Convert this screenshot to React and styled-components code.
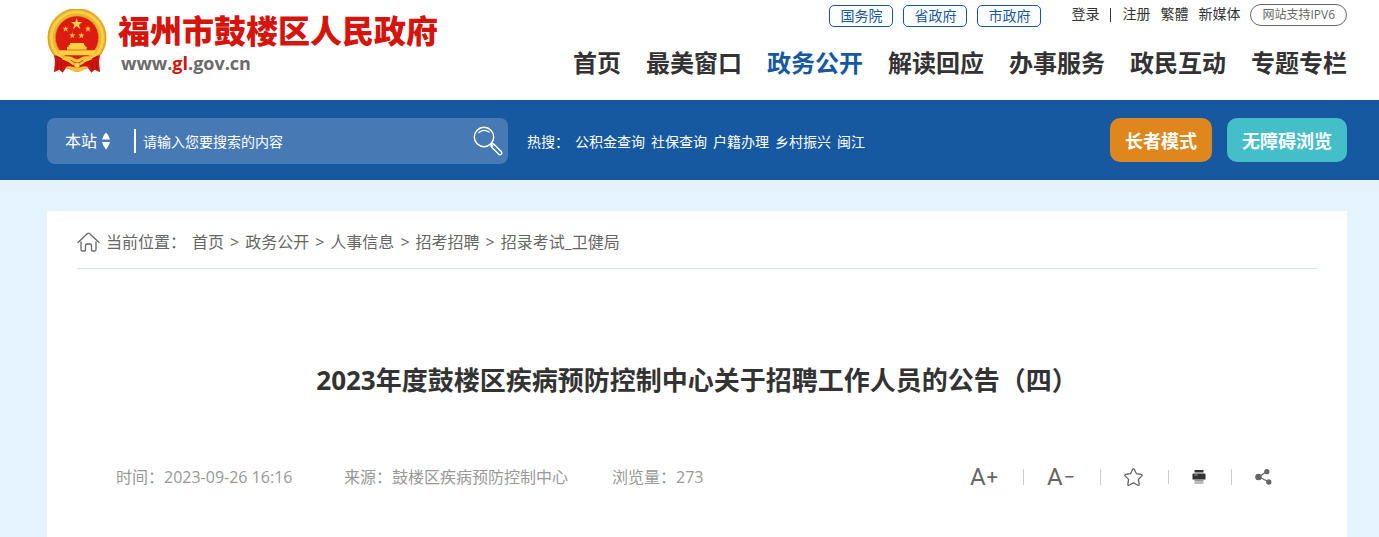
import React from 'react'
import styled, { createGlobalStyle, css } from 'styled-components'

const GlobalStyle = createGlobalStyle`
    * {
        box-sizing: border-box;
    }

    body {
        margin: 0;
        min-height: 100vh;
        background-color: #e5f2ff;
        color: #333;
        font-family: "Open Sans", "Noto Sans CJK SC", sans-serif;
        font-size: 14px;
    }

    a {
        color: inherit;
        text-decoration: none;
    }

    button, input, select {
        font: inherit;
        color: inherit;
        margin: 0;
        padding: 0;
        border: 0 none;
        background: none;
    }

    button {
        cursor: pointer;
    }
`

const Gutter = styled.div`
    padding: 0 32px 0 47px;
`

const Header = styled(Gutter).attrs({ as: 'header' })`
    display: flex;
    justify-content: space-between;
    height: 100px;
    background-color: #fff;
`

const Brand = styled.a`
    display: flex;
    align-items: flex-start;
    gap: 11px;
    padding-top: 9px;
`

const BrandText = styled.span`
    display: flex;
    flex-direction: column;
`

const BrandName = styled.span`
    color: #d5140c;
    font-size: 32px;
    font-weight: 900;
    line-height: 44px;
    white-space: nowrap;
`

const BrandUrl = styled.span`
    padding-left: 3px;
    color: #6b6b6b;
    font-size: 18px;
    font-weight: 700;
    line-height: 20px;

    & > em {
        color: #d5140c;
        font-style: normal;
    }
`

const HeaderRight = styled.div`
    display: flex;
    flex-direction: column;
    align-items: flex-end;
    padding-top: 4px;
`

const TopBar = styled.div`
    display: flex;
    align-items: flex-start;
    gap: 10px;
    line-height: 20px;
    white-space: nowrap;
`

const GovLinks = styled.div`
    display: flex;
    gap: 10px;
    padding-top: 1px;
`

const GovLink = styled.a`
    height: 22px;
    padding: 0 10px;
    border: 1px solid #1659a1;
    border-radius: 5px;
    color: #1659a1;
`

const UserLinks = styled.div`
    display: flex;
    gap: 10px;
    padding-left: 20px;
`

const Pipe = styled.span`
    width: 3px;
    text-align: center;

    &:after {
        content: '';
        display: inline-block;
        width: 1px;
        height: 14px;
        background-color: #333;
        vertical-align: middle;
    }
`

const Ipv6Link = styled.a`
    height: 22px;
    padding: 0 11px;
    border: 1px solid #666;
    border-radius: 11px;
    color: #666;
    font-size: 12px;
`

const Nav = styled.nav`
    display: flex;
    gap: 25px;
    margin-top: 18px;
`

const NavLink = styled.a`
    font-size: 24px;
    font-weight: 700;
    line-height: 36px;
    white-space: nowrap;
    ${({ $active }) => $active ? css`color: #1659a1;` : ''}
`

const SearchBand = styled(Gutter)`
    display: flex;
    align-items: flex-start;
    gap: 19px;
    height: 80px;
    padding-top: 18px;
    background-color: #1659a1;
    color: #fff;
`

const SearchForm = styled.form`
    display: flex;
    align-items: center;
    flex: 0 1 461px;
    height: 46px;
    padding: 0 5px 0 18px;
    border-radius: 8px;
    background-color: #477ab4;
`

const ScopeLabel = styled.label`
    display: flex;
    align-items: center;
    gap: 4px;
    padding-right: 23px;
`

const ScopeSelect = styled.select`
    appearance: none;
    width: 32px;
    font-size: 16px;
    line-height: 24px;
`

const SearchInput = styled.input`
    flex: 1 1 auto;
    min-width: 0;
    height: 24px;
    padding-left: 7px;
    border-left: 2px solid #fff;
    outline: none;

    &::placeholder {
        color: #fff;
        opacity: 1;
    }
`

const IconButton = styled.button`
    display: flex;
    align-items: center;
    justify-content: center;
`

const HotSearch = styled.div`
    display: flex;
    gap: 6px;
    flex: 1 1 auto;
    line-height: 48px;
    white-space: nowrap;
`

const ModeButtons = styled.div`
    display: flex;
    gap: 15px;
`

const ModeButton = styled.button`
    height: 44px;
    padding: 0 15px;
    border-radius: 10px;
    background-color: ${({ $color }) => $color};
    font-size: 18px;
    font-weight: 700;
    white-space: nowrap;
`

const Content = styled(Gutter).attrs({ as: 'main' })`
    padding-top: 31px;
`

const Article = styled.article`
    min-height: calc(100vh - 211px);
    padding: 0 30px;
    background-color: #fff;
`

const Breadcrumb = styled.nav`
    display: flex;
    align-items: center;
    gap: 6px;
    height: 58px;
    padding-top: 5px;
    border-bottom: 1px solid #d0e0f0;
    color: #666;
    font-size: 16px;
    line-height: 24px;
    white-space: nowrap;
`

const Crumbs = styled.span`
    display: flex;
    gap: 6px;
`

const Title = styled.h1`
    margin: 91px 0 0;
    font-size: 26px;
    font-weight: 700;
    line-height: 40px;
    text-align: center;
`

const MetaRow = styled.div`
    display: flex;
    align-items: center;
    justify-content: space-between;
    padding: 63px 45px 0 39px;
`

const Meta = styled.div`
    display: flex;
    gap: 44px;
    color: #999;
    font-size: 16px;
    line-height: 24px;
    white-space: nowrap;
`

const PublishTime = styled.span`
    min-width: 184px;
`

const Tools = styled.div`
    display: flex;
    align-items: center;
    color: #666;

    & > * + * {
        margin-left: 25px;
        padding-left: 24px;
        background: linear-gradient(#ccc, #ccc) left center / 1px 16px no-repeat;
    }
`

const FontSizeButton = styled(IconButton)`
    gap: 1px;
    font-family: Roboto, sans-serif;
    font-size: 24px;
    line-height: 28px;
`

const Emblem = () => (
    <svg width="60" height="66" viewBox="21 25 180 198" aria-hidden="true">
        <circle cx="111" cy="111" r="76" fill="#d9190f" stroke="#edb52c" strokeWidth="25" />
        <circle cx="111" cy="111" r="86" fill="none" stroke="#dca425" strokeWidth="3" />
        <circle cx="111" cy="111" r="77" fill="none" stroke="#f8cf4c" strokeWidth="8" />
        <circle cx="111" cy="111" r="65" fill="#dc1b12" stroke="#dd9a1d" strokeWidth="2" />
        <path d="M110 52l4 12h13l-10 8 4 13-11-8-11 8 4-13-10-8h13z" fill="#ffcf45" />
        <g fill="#f6bc39">
            <path d="M77 75l2 6h7l-5 5 2 7-6-4-6 4 2-7-5-5h7z" />
            <path d="M144 75l2 6h7l-5 5 2 7-6-4-6 4 2-7-5-5h7z" />
            <path d="M97 95l2 6h7l-5 5 2 7-6-4-6 4 2-7-5-5h7z" />
            <path d="M124 95l2 6h7l-5 5 2 7-6-4-6 4 2-7-5-5h7z" />
        </g>
        <path d="M91 127h40l3 8h-46zM86 134h50v6h-50zM81 138h59v9h-59zM55 149h112l-6 15h-100z" fill="#fdd13f" />
        <path d="M84 147h54" stroke="#e39b23" strokeWidth="2" />
        <path d="M42 164q10 0 18 6l17 10 34 14 34-14 17-10q8-6 18-6l-3 18 3 33-16-8-10 9-10-14-12 4q-21 14-42 0l-12-4-10 14-10-9-16 8 3-33z" fill="#cf1510" />
        <path d="M48 168q24 9 32 22M174 168q-24 9-32 22M55 180l-4 26M65 184l-2 24M167 180l4 26M157 184l2 24" fill="none" stroke="#b00d0b" strokeWidth="3" />
        <path d="M72 170q18-8 30 3l9 5 9-5q12-11 30-3l6 8q-16-1-22 7-8 10-23 10t-23-10q-6-8-22-7z" fill="#f5c53b" />
        <path d="M92 178q10 9 19 9t19-9" fill="none" stroke="#c44a16" strokeWidth="3" />
        <path d="M76 200q11-6 21-2l14 4 14-4q10-4 21 2-9 3-16 9-19 9-38 0-7-6-16-9z" fill="#f3c23b" />
        <circle cx="111" cy="194" r="8" fill="#ffd85a" stroke="#d58e18" strokeWidth="2" />
    </svg>
)

const SortArrows = () => (
    <svg width="10" height="18" viewBox="0 0 10 18" fill="#fff" aria-hidden="true">
        <path d="M5 0.500Q7.500 2.500 9 7.500H1Q2.500 2.500 5 .5zM1 10H9Q7.500 15 5 17.500 2.500 15 1 10z" />
    </svg>
)

const SearchIcon = () => (
    <svg width="30" height="30" viewBox="0 0 30 30" fill="none" stroke="#fff" strokeWidth="1.400" aria-hidden="true">
        <circle cx="11" cy="11" r="9.700" />
        <path d="M6 6.500Q10.500 2.500 16 6M17.700 18l2 2" strokeLinecap="round" />
        <path d="M18.500 21q-1.200-1.500 0-2.700 1.300-1 2.700.2l7 7q1.200 1.500 0 2.700-1.300 1-2.700-.2z" />
    </svg>
)

const HomeIcon = () => (
    <svg width="23" height="20" viewBox="0 0 23 20" fill="none" stroke="#666" strokeWidth="1.300" strokeLinecap="round" strokeLinejoin="round" aria-hidden="true">
        <path d="M1 10.500L10.200 1.700q1.300-1.200 2.600 0L22 10.500" />
        <path d="M4 10v7.500q0 1.500 1.500 1.500h2q1 0 1-1v-4.500q0-1.500 1.500-1.500h3q1.500 0 1.500 1.500V18q0 1 1 1h2q1.500 0 1.500-1.500V10" />
    </svg>
)

const StarIcon = () => (
    <svg width="19" height="18" viewBox="0 0 19 18" fill="none" stroke="#666" strokeWidth="1.300" strokeLinejoin="round" aria-hidden="true">
        <path d="M8.700 1.200q.8-.9 1.600 0l2.200 4.500 5 .8q1.200.4.400 1.400l-3.500 3.500.8 5q0 1.200-1.200.9L9.500 14.900 5 17.300q-1.200.3-1.200-.9l.8-5L1.100 7.900q-.8-1 .4-1.400l5-.8z" />
    </svg>
)

const PrintIcon = () => (
    <svg width="14" height="14" viewBox="0 0 14 14" aria-hidden="true">
        <path d="M2.500 0h9v2.500h-9z" fill="#333" />
        <path d="M1.500 3.500h11q1 0 1 1V9.500h-13v-5q0-1 1-1z" fill="#333" />
        <path d="M2.500 5h3" stroke="#aaa" />
        <path d="M2.500 9.500h9V14h-9z" fill="#bbb" />
        <path d="M2.500 10h9" stroke="#777" />
    </svg>
)

const ShareIcon = () => (
    <svg width="17" height="16" viewBox="0 0 17 16" fill="#666" aria-hidden="true">
        <path d="M11.500 2.500L4 8l10 5" fill="none" stroke="#666" strokeWidth="1.300" />
        <circle cx="3.500" cy="8" r="3.300" />
        <circle cx="11.800" cy="2.700" r="2.600" />
        <circle cx="13.800" cy="13" r="2.700" />
    </svg>
)

const govLinks = ['国务院', '省政府', '市政府']
const navItems = ['首页', '最美窗口', '政务公开', '解读回应', '办事服务', '政民互动', '专题专栏']
const hotWords = ['公积金查询', '社保查询', '户籍办理', '乡村振兴', '闽江']
const crumbs = ['首页', '政务公开', '人事信息', '招考招聘', '招录考试_卫健局']

const App = () => (
    <>
        <GlobalStyle />
        <Header>
            <Brand href="#">
                <Emblem />
                <BrandText>
                    <BrandName>福州市鼓楼区人民政府</BrandName>
                    <BrandUrl>www.<em>gl</em>.gov.cn</BrandUrl>
                </BrandText>
            </Brand>
            <HeaderRight>
                <TopBar>
                    <GovLinks>
                        {govLinks.map((name) => <GovLink href="#" key={name}>{name}</GovLink>)}
                    </GovLinks>
                    <UserLinks>
                        <a href="#">登录</a>
                        <Pipe />
                        <a href="#">注册</a>
                        <a href="#">繁體</a>
                        <a href="#">新媒体</a>
                    </UserLinks>
                    <Ipv6Link href="#">网站支持IPV6</Ipv6Link>
                </TopBar>
                <Nav>
                    {navItems.map((name) => (
                        <NavLink href="#" key={name} $active={name === '政务公开'}>{name}</NavLink>
                    ))}
                </Nav>
            </HeaderRight>
        </Header>
        <SearchBand>
            <SearchForm onSubmit={(e) => e.preventDefault()}>
                <ScopeLabel>
                    <ScopeSelect aria-label="搜索范围">
                        <option>本站</option>
                    </ScopeSelect>
                    <SortArrows />
                </ScopeLabel>
                <SearchInput type="text" aria-label="搜索" placeholder="请输入您要搜索的内容" />
                <IconButton type="submit" aria-label="搜索"><SearchIcon /></IconButton>
            </SearchForm>
            <HotSearch>
                <span>热搜：</span>
                {hotWords.map((word) => <a href="#" key={word}>{word}</a>)}
            </HotSearch>
            <ModeButtons>
                <ModeButton type="button" $color="#df861d">长者模式</ModeButton>
                <ModeButton type="button" $color="#44bec8">无障碍浏览</ModeButton>
            </ModeButtons>
        </SearchBand>
        <Content>
            <Article>
                <Breadcrumb>
                    <HomeIcon />
                    <span>当前位置：</span>
                    <Crumbs>
                        {crumbs.map((name, i) => (
                            <React.Fragment key={name}>
                                {i > 0 && <span>&gt;</span>}
                                <a href="#">{name}</a>
                            </React.Fragment>
                        ))}
                    </Crumbs>
                </Breadcrumb>
                <Title>2023年度鼓楼区疾病预防控制中心关于招聘工作人员的公告（四）</Title>
                <MetaRow>
                    <Meta>
                        <PublishTime>时间：2023-09-26 16:16</PublishTime>
                        <span>来源：鼓楼区疾病预防控制中心</span>
                        <span>浏览量：273</span>
                    </Meta>
                    <Tools>
                        <FontSizeButton type="button">A<small>+</small></FontSizeButton>
                        <FontSizeButton type="button">A<small>−</small></FontSizeButton>
                        <IconButton type="button" aria-label="收藏"><StarIcon /></IconButton>
                        <IconButton type="button" aria-label="打印"><PrintIcon /></IconButton>
                        <IconButton type="button" aria-label="分享"><ShareIcon /></IconButton>
                    </Tools>
                </MetaRow>
            </Article>
        </Content>
    </>
)

export default App
